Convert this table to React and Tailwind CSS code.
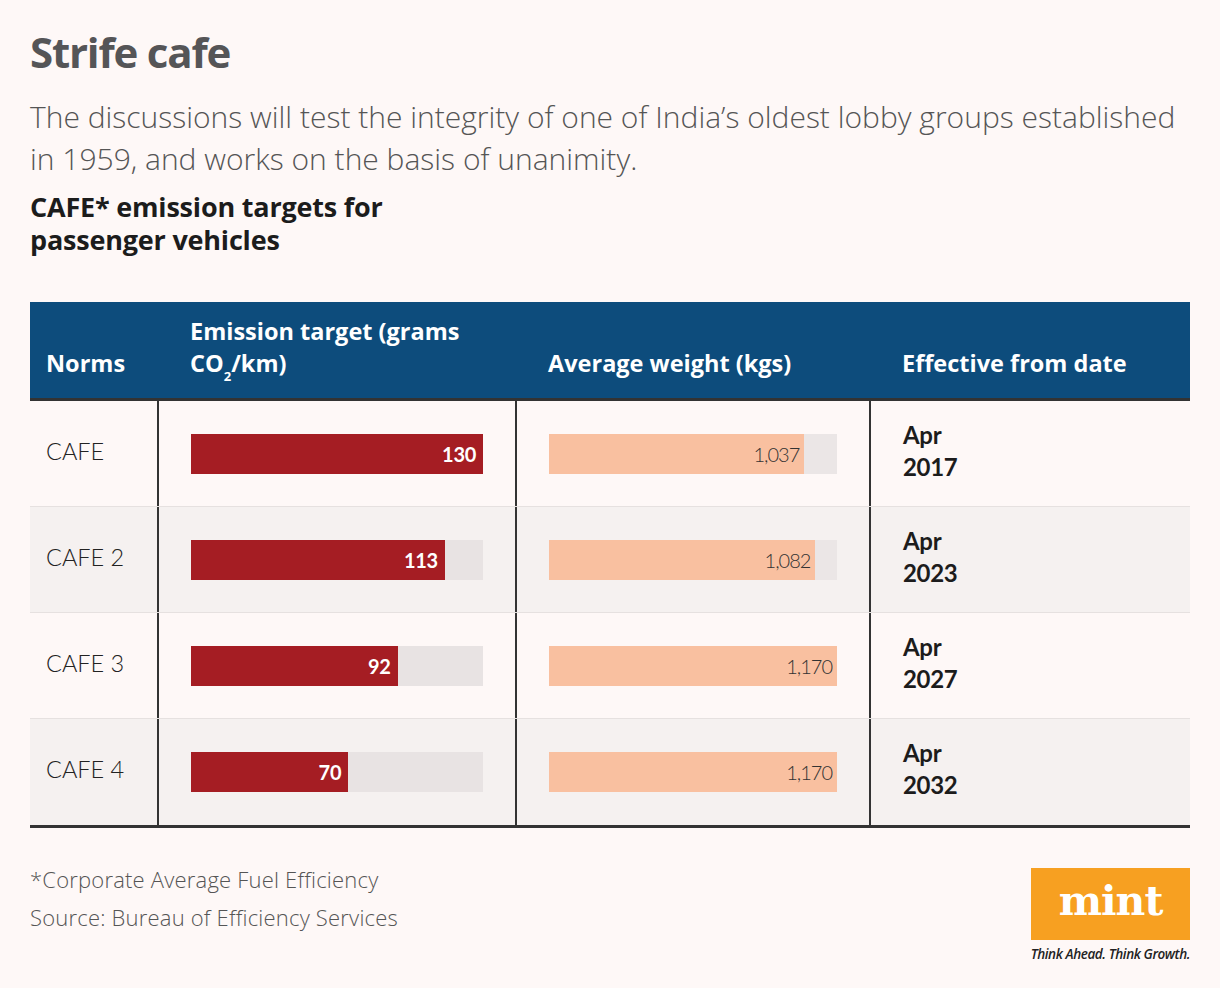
import React from "react";

const rows = [
  { norm: "CAFE", em: 130, wt: 1037, wtLabel: "1,037", year: "2017", alt: false },
  { norm: "CAFE 2", em: 113, wt: 1082, wtLabel: "1,082", year: "2023", alt: true },
  { norm: "CAFE 3", em: 92, wt: 1170, wtLabel: "1,170", year: "2027", alt: false },
  { norm: "CAFE 4", em: 70, wt: 1170, wtLabel: "1,170", year: "2032", alt: true },
];

const OS = { fontFamily: "'Open Sans', Lato, sans-serif" };

export default function App() {
  return (
    <div className="w-[1220px] h-[988px] bg-[#fef8f7] overflow-hidden" style={{ fontFamily: "Lato, 'Open Sans', sans-serif" }}>
      <div className="px-[30px] pt-[28px]">
        <h1 className="text-[42px] leading-[48px] font-bold text-[#555557] tracking-[-1.2px]" style={OS}>Strife cafe</h1>
        <p className="mt-[20px] text-[30px] leading-[42px] font-light text-[#555]" style={OS}>
          The discussions will test the integrity of one of India’s oldest lobby groups established in 1959, and works on the basis of unanimity.
        </p>
        <h2 className="mt-[10px] text-[27px] leading-[33px] font-bold text-[#1c1c1c] w-[420px] tracking-[-0.2px]" style={OS}>
          CAFE* emission targets for passenger vehicles
        </h2>

        <div className="mt-[46px] w-[1160px]">
          <div className="grid grid-cols-[129px_358px_354px_319px] bg-[#0d4c7c] h-[99px] border-b-[3px] border-[#333] text-white font-bold text-[23.5px] leading-[32px]" style={OS}>
            <div className="flex items-end pb-[19px] pl-[16px]">Norms</div>
            <div className="flex items-end pb-[19px] pl-[31px]">
              <span>Emission target (grams<br />CO<sub className="text-[13px] align-[-6px]">2</sub>/km)</span>
            </div>
            <div className="flex items-end pb-[19px] pl-[31px]">Average weight (kgs)</div>
            <div className="flex items-end pb-[19px] pl-[31px]">Effective from date</div>
          </div>
          {rows.map((r, i) => (
            <div
              key={i}
              className={`grid grid-cols-[129px_358px_354px_319px] h-[106px] ${r.alt ? "bg-[#f5f1f0]" : "bg-[#fef8f7]"} ${i < rows.length - 1 ? "border-b border-[#e6e1e0]" : ""}`}
            >
              <div className="flex items-center pl-[16px] pb-[4px] border-r-2 border-[#333] text-[23.5px] font-light text-[#222] whitespace-nowrap">
                {r.norm}
              </div>
              <div className="flex items-center pl-[32px] border-r-2 border-[#333]">
                <div className="w-[292px] h-[40px] bg-[#e8e3e3] flex">
                  <div className="h-full bg-[#a51d23] flex items-center justify-end pr-[7px] text-white font-bold text-[20px] tracking-[-0.3px]" style={{ width: `${(r.em / 130) * 100}%` }}>
                    {r.em}
                  </div>
                </div>
              </div>
              <div className="flex items-center pl-[32px] border-r-2 border-[#333]">
                <div className="w-[288px] h-[40px] bg-[#ebe6e6] flex">
                  <div className="h-full bg-[#f9c0a0] flex items-center justify-end pr-[5px] text-[#333] font-light text-[20px] tracking-[-1px]" style={{ width: `${(r.wt / 1170) * 100}%` }}>
                    {r.wtLabel}
                  </div>
                </div>
              </div>
              <div className="pl-[32px] pt-[18px] text-[24px] leading-[32px] font-bold text-[#1c1c1c] tracking-[-0.3px]">
                Apr<br />{r.year}
              </div>
            </div>
          ))}
          <div className="h-[3px] bg-[#333]" />
        </div>

        <div className="flex justify-between items-start mt-[32px] w-[1160px]">
          <div className="text-[22px] leading-[38px] font-light text-[#555] tracking-[0.2px]" style={OS}>
            <div>*Corporate Average Fuel Efficiency</div>
            <div>Source: Bureau of Efficiency Services</div>
          </div>
          <div className="flex flex-col items-end mt-[8px]">
            <div className="w-[159px] h-[72px] bg-[#f7a021] flex items-center justify-center">
              <span className="text-white font-bold text-[41px] leading-none pb-[6px] tracking-[-1px]" style={{ fontFamily: "'DejaVu Serif', 'Liberation Serif', serif" }}>mint</span>
            </div>
            <div className="mt-[5px] text-[13.5px] leading-[18px] italic font-semibold text-[#222] tracking-[-0.4px]" style={OS}>Think Ahead. Think Growth.</div>
          </div>
        </div>
      </div>
    </div>
  );
}
